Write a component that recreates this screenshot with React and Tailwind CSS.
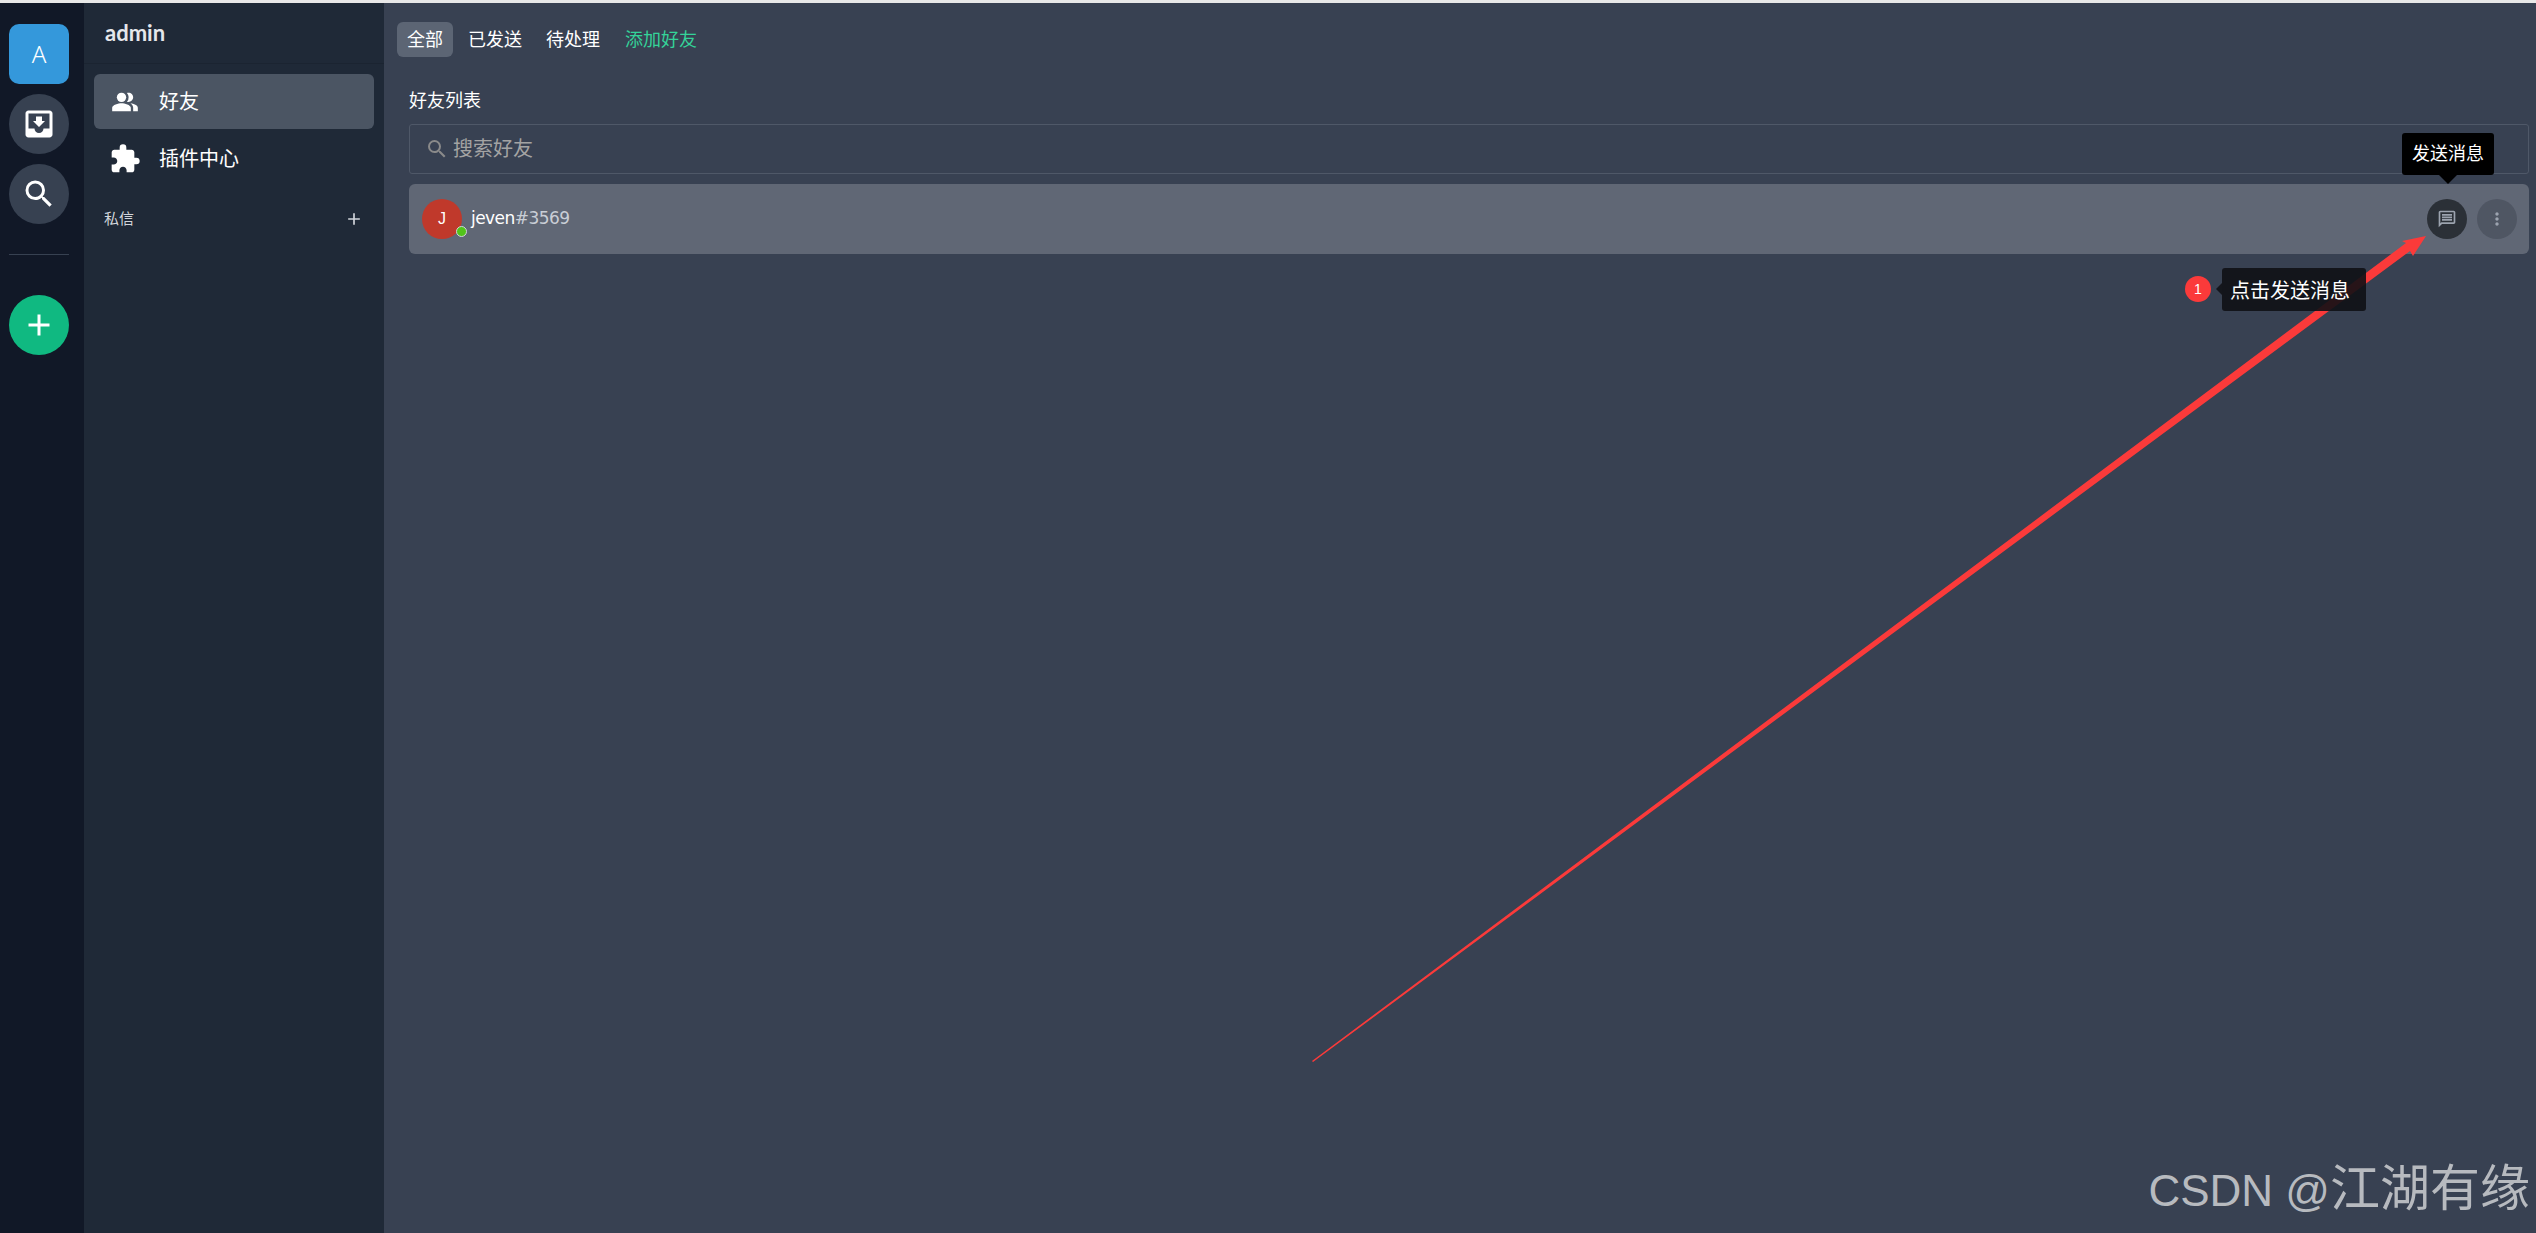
import React from "react"
import { MdPeopleAlt, MdExtension, MdMoveToInbox, MdSearch, MdAdd, MdOutlineMessage, MdMoreVert } from "react-icons/md"

function NavCircle({ children }) {
  return (
    <div className="w-[60px] h-[60px] rounded-full bg-[#374151] flex items-center justify-center text-white">
      {children}
    </div>
  )
}

function SideItem({ icon, label, active }) {
  return (
    <div className={`h-[55px] rounded-md flex items-center pl-[15px] text-white ${active ? "bg-[#4b5563]" : ""}`}>
      <span className="w-[32px] flex justify-center">{icon}</span>
      <span className="ml-[18px] text-[20px]">{label}</span>
    </div>
  )
}

function Sidebar() {
  return (
    <div className="w-[300px] bg-[#1f2937] flex flex-col shrink-0">
      <div className="h-[61px] border-b border-[#1b2431] pl-[21px] pt-[13px] text-[22px] leading-[34px] font-bold text-[#e5e7eb] [font-family:'Lato','Inter',sans-serif]">
        admin
      </div>
      <div className="px-[10px] pt-[10px] flex flex-col gap-[2px]">
        <SideItem active label="好友" icon={<MdPeopleAlt size={28} />} />
        <SideItem label="插件中心" icon={<MdExtension size={32} />} />
      </div>
      <div className="flex items-center justify-between pl-[20px] pr-[20px] mt-[22px] text-[#d1d5db]">
        <span className="text-[15px]">私信</span>
        <MdAdd size={20} />
      </div>
    </div>
  )
}

function Tabs() {
  return (
    <div className="flex items-center gap-[4px] pl-[13px] pt-[19px] text-[18px] leading-[36px] text-white">
      <div className="h-[35px] px-[10px] rounded-md bg-[#5c6574]">全部</div>
      <div className="h-[35px] px-[10px] ml-[1px]">已发送</div>
      <div className="h-[35px] px-[10px]">待处理</div>
      <div className="h-[35px] px-[10px] ml-[1px] text-[#34d399]">添加好友</div>
    </div>
  )
}

function FriendRow() {
  return (
    <div className="mt-[10px] h-[70px] rounded-md bg-[#606775] flex items-center pl-[13px] pr-[12px]">
      <div className="relative w-[40px] h-[40px] rounded-full bg-[#c0392b] flex items-center justify-center text-white text-[16px] font-light">
        J
        <span className="absolute left-[34px] top-[27px] w-[11px] h-[11px] rounded-full bg-[#52c41a] border border-[#d1d5db]" />
      </div>
      <div className="ml-[9px] text-[17px] tracking-[-0.55px] [font-family:'DejaVu_Sans',sans-serif] text-white">
        jeven<span className="text-[#c9ced6]">#3569</span>
      </div>
      <div className="ml-auto flex items-center gap-[10px]">
        <div className="relative w-[40px] h-[40px] rounded-full bg-[#2b3037] flex items-center justify-center text-[#9ca3af]">
          <MdOutlineMessage size={20} />
          <div className="absolute left-[-25px] top-[-66px] w-[92px] h-[42px] rounded-[3px] bg-black text-white text-[18px] flex items-center justify-center">
            发送消息
            <span className="absolute left-[37px] top-[42px] border-x-[9px] border-x-transparent border-t-[9px] border-t-black" />
          </div>
        </div>
        <div className="w-[40px] h-[40px] rounded-full bg-[#4f5663] flex items-center justify-center text-[#9ca3af]">
          <MdMoreVert size={20} />
        </div>
      </div>
    </div>
  )
}

function Arrow() {
  return (
    <svg className="absolute inset-0 pointer-events-none" width="2536" height="1233" viewBox="0 0 2536 1233">
      <polygon
        points="1312,1061 2406,243 2402,241 2426,236 2413,256 2410,251 1313,1062"
        fill="#fb3a3a"
      />
    </svg>
  )
}

export default function App() {
  return (
    <div className="relative w-screen h-screen overflow-hidden bg-[#e8e8e8] pt-[3px] flex text-white [font-family:'Liberation_Sans','Noto_Sans_CJK_SC',sans-serif]">
      <div className="w-[84px] bg-[#111827] flex flex-col pl-[9px] pt-[21px] shrink-0">
        <div className="w-[60px] h-[60px] rounded-[10px] bg-[#3498db] flex items-center justify-center text-[24px] font-light [font-family:'Noto_Sans',sans-serif]">
          A
        </div>
        <div className="mt-[10px] flex flex-col gap-[10px]">
          <NavCircle><MdMoveToInbox size={36} /></NavCircle>
          <NavCircle><MdSearch size={36} /></NavCircle>
        </div>
        <div className="mt-[30px] w-[60px] border-t border-[#374151]" />
        <div className="mt-[40px] w-[60px] h-[60px] rounded-full bg-[#10b981] flex items-center justify-center">
          <MdAdd size={36} />
        </div>
      </div>

      <Sidebar />

      <div className="flex-1 bg-[#384152] min-w-0">
        <Tabs />
        <div className="pl-[25px] pr-[7px]">
          <div className="mt-[32px] text-[18px] leading-[24px]">好友列表</div>
          <div className="mt-[11px] h-[50px] rounded-[3px] border border-[#4f5868] flex items-center pl-[15px] text-[#a3a3a3]">
            <MdSearch size={24} className="text-[#8a8a8a]" />
            <span className="ml-[4px] text-[20px]">搜索好友</span>
          </div>
          <FriendRow />
        </div>
      </div>

      <Arrow />

      <div className="absolute left-[2185px] top-[276px] w-[26px] h-[26px] rounded-full bg-[#fb3a3a] flex items-center justify-center text-[14px] text-white">
        1
      </div>
      <div className="absolute left-[2222px] top-[268px] w-[144px] h-[43px] rounded-[3px] bg-[#0f1115]/90 flex items-center pl-[8px] pt-[2px] text-[20px] text-white">
        点击发送消息
        <span className="absolute left-[-6px] top-[15px] border-y-[6px] border-y-transparent border-r-[6px] border-r-[#14161c]" />
      </div>

      <div className="absolute right-[6px] top-[1159px] text-[50px] leading-[60px] text-[#b7babf] whitespace-nowrap">
        <span className="text-[44px]">CSDN @</span>江湖有缘
      </div>
    </div>
  )
}
